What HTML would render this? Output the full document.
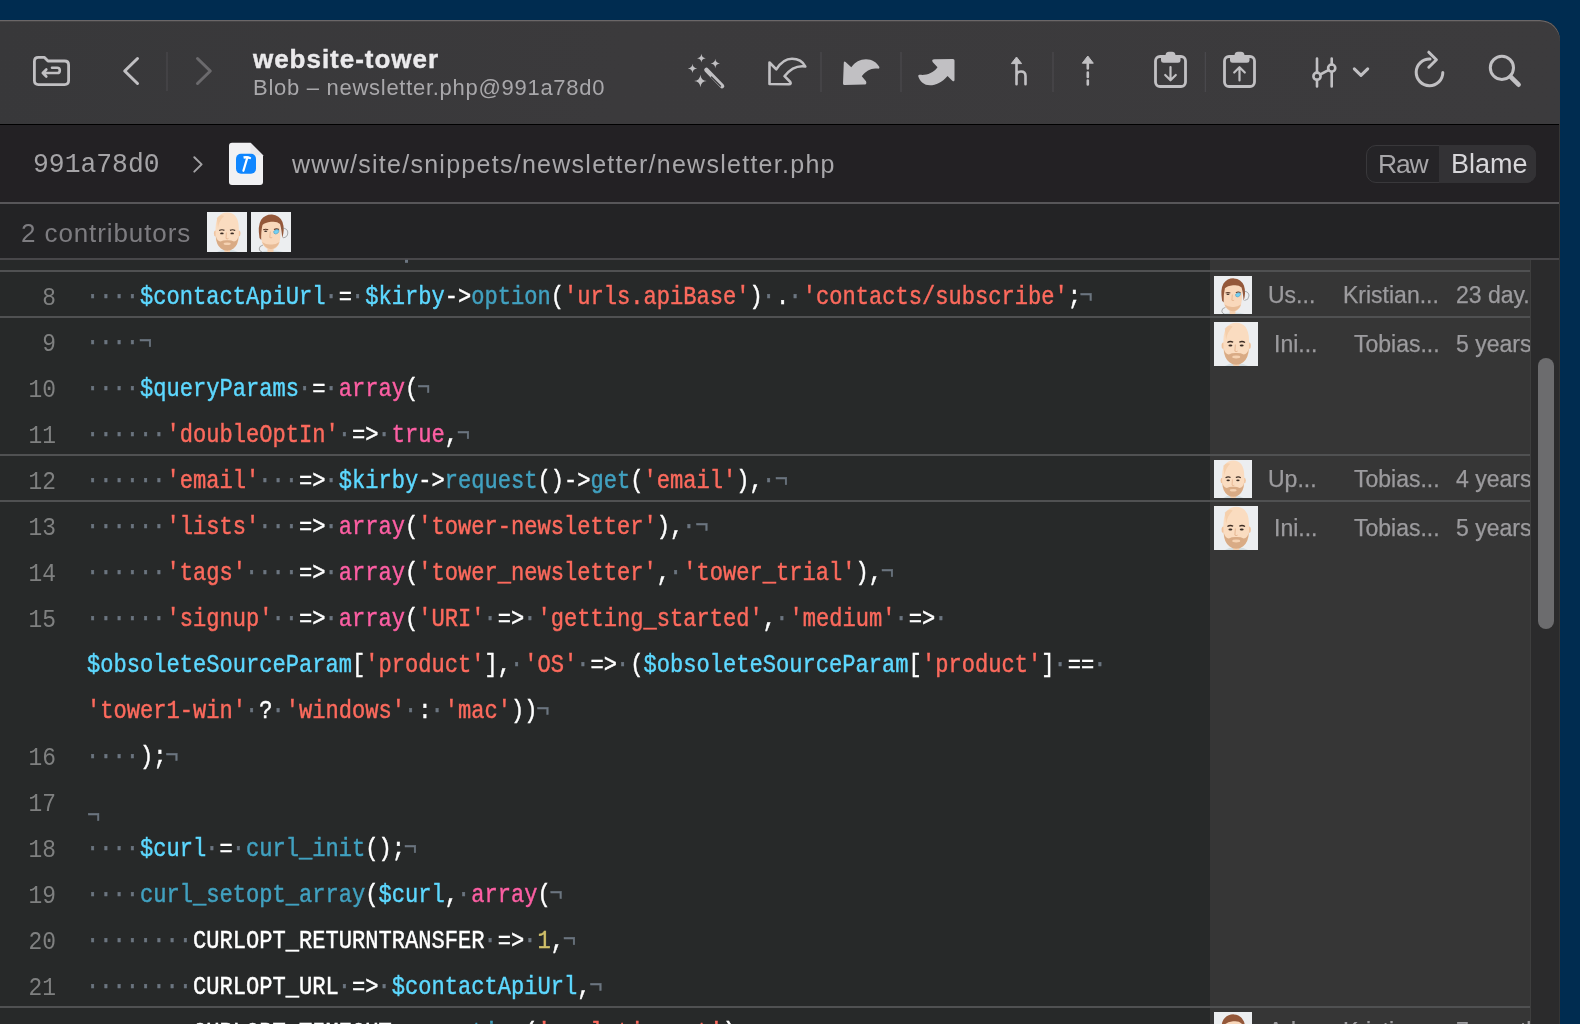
<!DOCTYPE html>
<html><head><meta charset="utf-8">
<style>
*{margin:0;padding:0;box-sizing:border-box}
html,body{width:1580px;height:1024px;overflow:hidden;background:#002c50;font-family:"Liberation Sans",sans-serif}
#win{position:absolute;left:0;top:20px;width:1560px;height:1004px;border-top-right-radius:20px;overflow:hidden;background:#272929}
#pg{position:absolute;left:0;top:-20px;width:1560px;height:1024px;will-change:transform}
.r{position:absolute}
#tb{left:0;top:20px;width:1560px;height:104px;background:linear-gradient(100deg,#38383a 0%,#3b3a3c 40%,#3c3b3d 100%)}
#tbtop{left:-10px;top:20px;width:1570px;height:30px;border-top-right-radius:20px;box-shadow:inset 0 1.3px 0 #6b6768}
#tbline{left:0;top:124px;width:1560px;height:1px;background:#000}
#crumb{left:0;top:125px;width:1560px;height:77px;background:#232124}
#sep1{left:0;top:202px;width:1560px;height:2px;background:#575659}
#contrib{left:0;top:204px;width:1560px;height:54px;background:#232325}
#sep2{left:0;top:258px;width:1560px;height:2px;background:#48474a}
#code{left:0;top:260px;width:1210px;height:764px;background:#272929}
#blame{left:1210px;top:260px;width:321px;height:764px;background:#363636}
#track{left:1531px;top:260px;width:29px;height:764px;background:#2b2b2c}
#thumb{left:1538px;top:358px;width:16px;height:271px;border-radius:8px;background:#6c6c6e}
.rs{position:absolute;left:0;width:1531px;height:2px;background:#505152}
.title{left:253px;top:42px;font-weight:bold;font-size:26px;line-height:34px;color:#ebeaec;letter-spacing:0.97px;-webkit-text-stroke:0.4px #ebeaec;white-space:pre}
.sub{left:253px;top:74px;font-size:22px;line-height:28px;color:#a9a8ab;letter-spacing:0.72px;white-space:pre}
.hash{left:33px;top:147px;font-family:"Liberation Mono",monospace;font-size:28.5px;line-height:36px;transform:scaleX(0.925);transform-origin:0 0;color:#a5a4a7;white-space:pre}
.path{left:292px;top:146px;font-size:25px;line-height:36px;color:#a9a8ab;letter-spacing:1.27px;white-space:pre}
.contrib{left:21px;top:215px;font-size:26px;line-height:36px;color:#7d7c80;letter-spacing:0.9px;white-space:pre}
#seg{left:1366px;top:145px;width:170px;height:38px;border-radius:10px;border:1.5px solid #39383b;background:#252427;overflow:hidden}
#segb{left:1439px;top:145px;width:97px;height:38px;border-radius:0 10px 10px 0;background:#333235}
.raw{left:1378px;top:145px;font-size:26.5px;line-height:38px;color:#a7a6a9;letter-spacing:-1.2px;white-space:pre}
.blm{left:1451px;top:145px;font-size:27px;line-height:38px;color:#d8d7da;white-space:pre}
.cl{position:absolute;left:86.6px;font-family:"Liberation Mono",monospace;font-size:25px;line-height:46px;white-space:pre;margin-top:5px;color:#ffffff;transform:scaleX(0.8832);transform-origin:0 0;-webkit-text-stroke:0.45px currentColor}
.ln{position:absolute;left:0;width:56px;text-align:right;font-family:"Liberation Mono",monospace;font-size:26px;line-height:46px;margin-top:4.5px;transform:scaleX(0.88);transform-origin:100% 0;color:#7f8080;white-space:pre}
.d{color:#6c7681;position:relative;left:-1.1px;top:-1px}.v{color:#5dd8ff}.m{color:#41a1c0}.s{color:#fc6a5d}.k{color:#fc5fa3}.n{color:#d0bf69}.p{color:#ffffff}.e{color:#6c7681;position:relative;left:-1.5px;top:-1px}
.f{color:#6c7681;position:relative;top:13px;left:0px}
.bt{position:absolute;font-size:23px;line-height:30px;color:#9c9b9e;white-space:pre;-webkit-text-stroke:0.25px #9c9b9e}
</style></head><body>
<div id="win"><div id="pg">
<div class="r" id="tb"></div>
<div class="r" id="tbtop"></div>
<div class="r" id="tbline"></div>
<div class="r" id="crumb"></div>
<div class="r" id="sep1"></div>
<div class="r" id="contrib"></div>
<div class="r" id="sep2"></div>
<div class="r" id="code"></div>
<div class="r" id="blame"></div>
<div class="r" id="track"></div>
<div class="r" id="thumb"></div>

<div class="r title">website-tower</div>
<div class="r sub">Blob – newsletter.php@991a78d0</div>
<div class="r hash">991a78d0</div>
<div class="r path">www/site/snippets/newsletter/newsletter.php</div>
<div class="r contrib">2 contributors</div>
<div class="r" id="seg"></div>
<div class="r" id="segb"></div>
<div class="r raw">Raw</div>
<div class="r blm">Blame</div>


<div class="ln" style="top:270px">8</div>
<div class="cl" style="top:270px"><span class="d">····</span><span class="v">$contactApiUrl</span><span class="d">·</span><span class="p">=</span><span class="d">·</span><span class="v">$kirby</span><span class="p">-&gt;</span><span class="m">option</span><span class="p">(</span><span class="s">'urls.apiBase'</span><span class="p">)</span><span class="d">·</span><span class="p">.</span><span class="d">·</span><span class="s">'contacts/subscribe'</span><span class="p">;</span><span class="e">¬</span></div>
<div class="ln" style="top:316px">9</div>
<div class="cl" style="top:316px"><span class="d">····</span><span class="e">¬</span></div>
<div class="ln" style="top:362px">10</div>
<div class="cl" style="top:362px"><span class="d">····</span><span class="v">$queryParams</span><span class="d">·</span><span class="p">=</span><span class="d">·</span><span class="k">array</span><span class="p">(</span><span class="e">¬</span></div>
<div class="ln" style="top:408px">11</div>
<div class="cl" style="top:408px"><span class="d">······</span><span class="s">'doubleOptIn'</span><span class="d">·</span><span class="p">=&gt;</span><span class="d">·</span><span class="k">true</span><span class="p">,</span><span class="e">¬</span></div>
<div class="ln" style="top:454px">12</div>
<div class="cl" style="top:454px"><span class="d">······</span><span class="s">'email'</span><span class="d">···</span><span class="p">=&gt;</span><span class="d">·</span><span class="v">$kirby</span><span class="p">-&gt;</span><span class="m">request</span><span class="p">()-&gt;</span><span class="m">get</span><span class="p">(</span><span class="s">'email'</span><span class="p">),</span><span class="d">·</span><span class="e">¬</span></div>
<div class="ln" style="top:500px">13</div>
<div class="cl" style="top:500px"><span class="d">······</span><span class="s">'lists'</span><span class="d">···</span><span class="p">=&gt;</span><span class="d">·</span><span class="k">array</span><span class="p">(</span><span class="s">'tower-newsletter'</span><span class="p">),</span><span class="d">·</span><span class="e">¬</span></div>
<div class="ln" style="top:546px">14</div>
<div class="cl" style="top:546px"><span class="d">······</span><span class="s">'tags'</span><span class="d">····</span><span class="p">=&gt;</span><span class="d">·</span><span class="k">array</span><span class="p">(</span><span class="s">'tower_newsletter'</span><span class="p">,</span><span class="d">·</span><span class="s">'tower_trial'</span><span class="p">),</span><span class="e">¬</span></div>
<div class="ln" style="top:592px">15</div>
<div class="cl" style="top:592px"><span class="d">······</span><span class="s">'signup'</span><span class="d">··</span><span class="p">=&gt;</span><span class="d">·</span><span class="k">array</span><span class="p">(</span><span class="s">'URI'</span><span class="d">·</span><span class="p">=&gt;</span><span class="d">·</span><span class="s">'getting_started'</span><span class="p">,</span><span class="d">·</span><span class="s">'medium'</span><span class="d">·</span><span class="p">=&gt;</span><span class="d">·</span></div>
<div class="cl" style="top:638px"><span class="v">$obsoleteSourceParam</span><span class="p">[</span><span class="s">'product'</span><span class="p">],</span><span class="d">·</span><span class="s">'OS'</span><span class="d">·</span><span class="p">=&gt;</span><span class="d">·</span><span class="p">(</span><span class="v">$obsoleteSourceParam</span><span class="p">[</span><span class="s">'product'</span><span class="p">]</span><span class="d">·</span><span class="p">==</span><span class="d">·</span></div>
<div class="cl" style="top:684px"><span class="s">'tower1-win'</span><span class="d">·</span><span class="p">?</span><span class="d">·</span><span class="s">'windows'</span><span class="d">·</span><span class="p">:</span><span class="d">·</span><span class="s">'mac'</span><span class="p">))</span><span class="e">¬</span></div>
<div class="ln" style="top:730px">16</div>
<div class="cl" style="top:730px"><span class="d">····</span><span class="p">);</span><span class="e">¬</span></div>
<div class="ln" style="top:776px">17</div>
<div class="cl" style="top:776px"><span class="f">¬</span></div>
<div class="ln" style="top:822px">18</div>
<div class="cl" style="top:822px"><span class="d">····</span><span class="v">$curl</span><span class="d">·</span><span class="p">=</span><span class="d">·</span><span class="m">curl_init</span><span class="p">();</span><span class="e">¬</span></div>
<div class="ln" style="top:868px">19</div>
<div class="cl" style="top:868px"><span class="d">····</span><span class="m">curl_setopt_array</span><span class="p">(</span><span class="v">$curl</span><span class="p">,</span><span class="d">·</span><span class="k">array</span><span class="p">(</span><span class="e">¬</span></div>
<div class="ln" style="top:914px">20</div>
<div class="cl" style="top:914px"><span class="d">········</span><span class="p">CURLOPT_RETURNTRANSFER</span><span class="d">·</span><span class="p">=&gt;</span><span class="d">·</span><span class="n">1</span><span class="p">,</span><span class="e">¬</span></div>
<div class="ln" style="top:960px">21</div>
<div class="cl" style="top:960px"><span class="d">········</span><span class="p">CURLOPT_URL</span><span class="d">·</span><span class="p">=&gt;</span><span class="d">·</span><span class="v">$contactApiUrl</span><span class="p">,</span><span class="e">¬</span></div>
<div class="ln" style="top:1006px">22</div>
<div class="cl" style="top:1006px"><span class="d">········</span><span class="p">CURLOPT_TIMEOUT</span><span class="d">·</span><span class="p">=&gt;</span><span class="d">·</span><span class="m">option</span><span class="p">(</span><span class="s">'curl.timeout'</span><span class="p">),</span><span class="e">¬</span></div>

<div class="rs" style="top:270px"></div>
<div class="rs" style="top:316px"></div>
<div class="rs" style="top:454px"></div>
<div class="rs" style="top:500px"></div>
<div class="rs" style="top:1006px"></div>

<div class="bt" style="left:1268px;top:280px">Us...</div>
<div class="bt" style="left:1343px;top:280px">Kristian...</div>
<div class="bt" style="left:1456px;top:280px">23 day.</div>
<div class="bt" style="left:1274px;top:329px">Ini...</div>
<div class="bt" style="left:1354px;top:329px">Tobias...</div>
<div class="bt" style="left:1456px;top:329px">5 years</div>
<div class="bt" style="left:1268px;top:464px">Up...</div>
<div class="bt" style="left:1354px;top:464px">Tobias...</div>
<div class="bt" style="left:1456px;top:464px">4 years</div>
<div class="bt" style="left:1274px;top:513px">Ini...</div>
<div class="bt" style="left:1354px;top:513px">Tobias...</div>
<div class="bt" style="left:1456px;top:513px">5 years</div>
<div class="bt" style="left:1268px;top:1016px">Ad...</div>
<div class="bt" style="left:1343px;top:1016px">Kristian...</div>
<div class="bt" style="left:1456px;top:1016px">7 month</div>
<div class="r" style="left:1531px;top:260px;width:29px;height:764px;background:#2b2b2c"></div>
<div class="r" style="left:1538px;top:358px;width:16px;height:271px;border-radius:8px;background:#6c6c6e"></div>

<div class="r" style="left:1530px;top:260px;width:1px;height:764px;background:#3e3e3e"></div>
<div class="r" style="left:1559px;top:124px;width:1px;height:900px;background:#353535"></div>
<svg class="r" style="left:0;top:0" width="1580" height="1024" viewBox="0 0 1580 1024">
<g fill="none" stroke="#c1c0c3" stroke-width="2.8" stroke-linecap="round" stroke-linejoin="round">
  <!-- folder return -->
  <path d="M38.4,57.4 H44.5 L48,61 H64.6 Q68.6,61 68.6,65 V80.6 Q68.6,84.6 64.6,84.6 H38.4 Q34.4,84.6 34.4,80.6 V61.4 Q34.4,57.4 38.4,57.4 Z"/>
  <path d="M52,67.8 H57.2 A2.6,2.6 0 0 1 57.2,73 H42.8 M46.3,69.5 L42.8,73 L46.3,76.5" stroke-width="2.6"/>
  <!-- back / forward -->
  <path d="M137.5,58.5 L124.7,71 L137.5,83.5" stroke-width="3"/>
  <path d="M197.5,58.5 L210.3,71 L197.5,83.5" stroke="#6b6a6d" stroke-width="3"/>
  <!-- outline undo -->
  <path d="M769.5,84 L769.5,62.5 L776.3,69.4 C781,62 786,58.8 792,58.8 C798,58.8 803,62 805.3,66.5 C799,65.5 791,68 784.5,76.2 L790.3,82 Q791.5,84.2 789,84.2 Z" stroke-width="2.6"/>
  <!-- branch up -->
  <path d="M1016.5,63 V84.3 M1016.5,76 Q1016.5,71.5 1021,71.5 Q1025.5,71.5 1025.5,76 V84.3" stroke-width="2.6"/>
  <!-- dotted arrow -->
  <path d="M1087.8,64 V68.5 M1087.8,72.5 V77 M1087.8,80.5 V84.5" stroke-width="2.6"/>
  <!-- clipboards -->
  <rect x="1155.5" y="56.5" width="30" height="30" rx="4.5"/>
  <path d="M1170.5,67 V80 M1165.2,75 L1170.5,80.3 L1175.8,75" stroke-width="2.2"/>
  <rect x="1224.5" y="56.5" width="30" height="30" rx="4.5"/>
  <path d="M1239.5,80.5 V67.5 M1234.2,72.5 L1239.5,67.2 L1244.8,72.5" stroke-width="2.2"/>
  <!-- sliders -->
  <path d="M1317,58.5 V72.6 M1317,79.8 V86.5 M1331.7,58.5 V64.5 M1331.7,71.7 V86.5 M1320.2,74.5 L1328.5,70.1" stroke-width="2.6"/>
  <circle cx="1317" cy="76.2" r="3.6" stroke-width="2.6"/>
  <circle cx="1331.7" cy="68.1" r="3.6" stroke-width="2.6"/>
  <path d="M1354.3,68.8 L1361,75.3 L1367.7,68.8" stroke-width="3"/>
  <!-- refresh -->
  <path d="M1442.8,72.4 A13.3,13.3 0 1 1 1430,59.1" stroke-width="3"/>
  <path d="M1428.8,52.2 L1436.4,59.7 L1428.8,67.2" stroke-width="3"/>
  <!-- search -->
  <circle cx="1501.9" cy="67.8" r="11.6" stroke-width="3"/>
  <path d="M1510.5,76.6 L1518.6,84.7" stroke-width="4.6"/>
  <!-- crumb chevron -->
  <path d="M194.3,157.2 L201.6,164.4 L194.3,171.6" stroke="#a3a2a5" stroke-width="2"/>
</g>
<g fill="#c1c0c3" stroke="none">
  <!-- magic wand sparkles --><path d="M701.4,53.800000000000004 Q701.752,57.848000000000006 705.8,58.2 Q701.752,58.552 701.4,62.6 Q701.048,58.552 697.0,58.2 Q701.048,57.848000000000006 701.4,53.800000000000004Z"/><path d="M715.3,58.8 Q715.6759999999999,63.124 720.0,63.5 Q715.6759999999999,63.876 715.3,68.2 Q714.924,63.876 710.5999999999999,63.5 Q714.924,63.124 715.3,58.8Z"/><path d="M692.5,63.7 Q692.876,68.024 697.2,68.4 Q692.876,68.77600000000001 692.5,73.10000000000001 Q692.124,68.77600000000001 687.8,68.4 Q692.124,68.024 692.5,63.7Z"/><path d="M700.4,74.7 Q700.904,80.496 706.6999999999999,81 Q700.904,81.504 700.4,87.3 Q699.896,81.504 694.1,81 Q699.896,80.496 700.4,74.7Z"/>
  <!-- filled undo -->
  <path d="M843,83.5 L843.8,62.5 Q844.3,60.8 845.6,62 L851.3,67.2 C855,62 860,59.2 866,59.2 C872,59.2 877,62.5 879.4,67 Q879.8,69 877.5,68.6 C872,67.5 866,70.5 861.8,76.2 L866,81.2 Q867.3,84.5 864,84.6 L844.5,85 Q843,85 843,83.5Z"/>
  <!-- filled redo -->
  <path d="M954.5,60.5 L954.5,80 Q954.3,82.2 952.3,80.8 L947.5,76 C942,82.5 936,85.3 930,85.3 C924,85.3 920,81.5 918.3,76.5 Q917.8,74.4 920,74.8 C926,75.5 933,73.5 937.5,67.3 L932.8,62.3 Q931,59.5 934.5,59.3 L953,59 Q954.5,59 954.5,60.5Z"/>
  <!-- arrow heads -->
  <path d="M1016.5,57 L1021.6,63.6 L1011.4,63.6 Z" stroke="#c1c0c3" stroke-width="1" stroke-linejoin="round"/>
  <path d="M1087.8,56 L1093.3,63.2 L1082.3,63.2 Z" stroke="#c1c0c3" stroke-width="1" stroke-linejoin="round"/>
  <!-- clipboard clips -->
  <path d="M1161,57.5 Q1161,55 1163.5,55 H1165.5 Q1166,51.8 1169,51.8 H1172 Q1175,51.8 1175.5,55 H1178 Q1180.5,55 1180.5,57.5 V60.5 Q1180.5,62.8 1178,62.8 H1163.5 Q1161,62.8 1161,60.5Z"/>
  <path d="M1230,57.5 Q1230,55 1232.5,55 H1234.5 Q1235,51.8 1238,51.8 H1241 Q1244,51.8 1244.5,55 H1247 Q1249.5,55 1249.5,57.5 V60.5 Q1249.5,62.8 1247,62.8 H1232.5 Q1230,62.8 1230,60.5Z"/>
</g>
<!-- wand -->
<path d="M706.5,70 L722,86" stroke="#c1c0c3" stroke-width="4.6" stroke-linecap="round"/>
<path d="M711.5,77 L720.5,86" stroke="#3b3a3c" stroke-width="1.4" stroke-linecap="round"/>
<!-- separators -->
<g fill="#4e4d50">
  <rect x="166.5" y="52" width="1" height="39"/>
  <rect x="820.5" y="52" width="1" height="40"/>
  <rect x="900.5" y="52" width="1" height="40"/>
  <rect x="1052.5" y="52" width="1" height="40"/>
  <rect x="1204.8" y="52" width="1" height="40"/>
</g>
<!-- file icon -->
<path d="M232,142.8 H250.5 L263,155.3 V182 Q263,185 260,185 H232 Q229,185 229,182 V145.8 Q229,142.8 232,142.8Z" fill="#f1f1f3"/>
<path d="M250.5,142.8 V152.3 Q250.5,155.3 253.5,155.3 H263Z" fill="#e8e8eb"/>
<rect x="236" y="153.8" width="20" height="20" rx="5" fill="#0f86ff"/>
<path d="M243.4,170.8 L247.3,157.6" stroke="#fff" stroke-width="2.2" stroke-linecap="round"/>
<path d="M243.3,156.3 Q247.5,155.2 251.2,157.4 L250.6,159.2 Q247,158.2 243.8,158.8 Z" fill="#fff"/>
<!-- top dot remnant -->
<rect x="405" y="259.8" width="3" height="3" fill="#6c7681"/>
</svg>
<svg class="r" style="left:0;top:0;width:0;height:0" width="0" height="0">
<defs>
<symbol id="avT" viewBox="0 0 40 40">
  <rect width="40" height="40" fill="#eceef0"/>
  <path d="M10,40 Q14,37 20,37.5 Q26,37 31,40Z" fill="#d3dde1"/>
  <rect x="17.5" y="34" width="5.5" height="6" fill="#f4cfae"/>
  <ellipse cx="8.6" cy="21.5" rx="1.7" ry="2.9" fill="#f0c49f"/>
  <ellipse cx="31.8" cy="21.5" rx="1.7" ry="2.9" fill="#f0c49f"/>
  <path d="M20.2,0.6 Q31.5,0.8 31.8,16 Q32,24 31.5,28 Q30,35 24,38 Q20.2,39.5 16.5,38 Q10.5,35 9,28 Q8.4,24 8.6,16 Q9,0.8 20.2,0.6Z" fill="#fadcc0"/>
  <path d="M9.8,6 Q13,2 17,4 Q12,9 11,16 Z" fill="#f2c9a3" opacity=".7"/>
  <path d="M8.8,24 Q9.2,33 14,36.5 Q17,38.8 20.2,38.8 Q23.5,38.8 26.5,36.5 Q31.2,33 31.6,24 Q30.5,29 27,29.5 Q24,28 20.2,28.2 Q16.5,28 13.5,29.5 Q10,29 8.8,24Z" fill="#d2a27a" opacity=".85"/>
  <ellipse cx="20.2" cy="31.8" rx="3.6" ry="1.3" fill="#f5d2b2"/>
  <path d="M12.2,18.6 Q14.8,17 17.4,18.4 M23,18.4 Q25.6,17 28.2,18.6" stroke="#3e2e25" stroke-width="1.2" fill="none"/>
  <ellipse cx="14.9" cy="21.4" rx="1.8" ry="0.95" fill="#3a2c24"/>
  <ellipse cx="25.2" cy="21.4" rx="1.8" ry="0.95" fill="#3a2c24"/>
  <path d="M19.4,20.5 L19,26.5 Q20.2,27.3 21.4,26.5" stroke="#e3b08a" stroke-width="0.8" fill="none"/>
</symbol>
<symbol id="avK" viewBox="0 0 40 40">
  <rect width="40" height="40" fill="#eceef0"/>
  <path d="M9,40 Q14,38 20,38.5 Q27,38 32,40Z" fill="#d3dde1"/>
  <rect x="16.5" y="34" width="6" height="6" fill="#f4cfae"/>
  <path d="M9.6,14 Q9.4,28 12,33 Q15.5,37.5 20,37.5 Q24.5,37.5 27.5,33 Q30,28 29.5,14 Q28,6 20,5.5 Q11,6 9.6,14Z" fill="#f9d8bb"/>
  <path d="M11,30 Q14,36.5 20,37.3 Q26,36.5 28.5,30 Q24,33 20,32.5 Q15.5,33 11,30Z" fill="#e4b58e" opacity=".8"/>
  <path d="M8.5,26 Q6.5,14 10,8 Q14,2.3 21,2.5 Q28.5,3 31.5,10 Q34,17 31.2,26 Q30.5,17 29,12 Q26,9 20,9.8 Q14,10.5 11.5,13 Q10,19 10.2,28Z" fill="#94583a"/>
  <path d="M12.2,17.8 Q14.7,16.8 17.2,17.8 M23,17.5 Q25.5,16.2 28,17.5" stroke="#5a3828" stroke-width="1.1" fill="none"/>
  <ellipse cx="14.7" cy="19.2" rx="1.6" ry="0.8" fill="#3e2e26"/>
  <path d="M22.6,19.5 Q25,16.5 27.8,18 Q28.3,21.5 24.5,22 Q22.5,21.8 22.6,19.5Z" fill="#74d0f2" stroke="#3b8fb8" stroke-width="0.5"/>
  <path d="M31.5,16 Q37,16.5 36.8,21 Q36.5,25.5 32,25.8" stroke="#6d6d6d" stroke-width="0.55" fill="none"/>
  <path d="M12,33 Q8,34 8.2,37 Q8.5,39.5 11,40" stroke="#6d6d6d" stroke-width="0.55" fill="none"/>
  <path d="M19.3,19.5 L18.8,25.5 Q20,26.2 21.2,25.5" stroke="#e2af88" stroke-width="0.8" fill="none"/>
</symbol>
</defs>
</svg>
<svg class="r" style="left:0;top:0" width="1580" height="1024">
  <use href="#avT" x="207" y="212" width="40" height="40"/>
  <use href="#avK" x="251" y="212" width="40" height="40"/>
  <use href="#avK" x="1214" y="276" width="38" height="38"/>
  <use href="#avT" x="1214" y="322" width="44" height="44"/>
  <use href="#avT" x="1214" y="460" width="38" height="38"/>
  <use href="#avT" x="1214" y="506" width="44" height="44"/>
  <use href="#avK" x="1214" y="1012" width="38" height="38"/>
</svg>

</div></div>
</body></html>
